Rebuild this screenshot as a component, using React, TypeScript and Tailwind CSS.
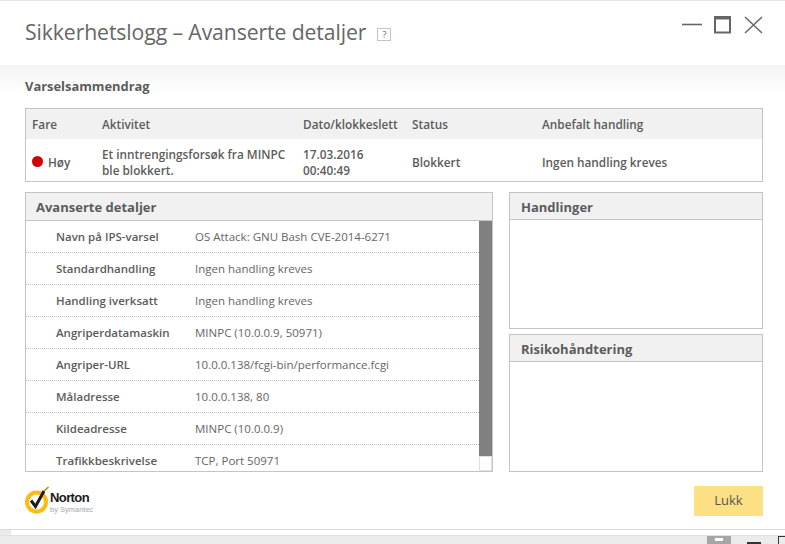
const FONT = "font-['Open_Sans','Noto_Sans',sans-serif]";

const DETAILS = [
  ['Navn på IPS-varsel', 'OS Attack: GNU Bash CVE-2014-6271'],
  ['Standardhandling', 'Ingen handling kreves'],
  ['Handling iverksatt', 'Ingen handling kreves'],
  ['Angriperdatamaskin', 'MINPC (10.0.0.9, 50971)'],
  ['Angriper-URL', '10.0.0.138/fcgi-bin/performance.fcgi'],
  ['Måladresse', '10.0.0.138, 80'],
  ['Kildeadresse', 'MINPC (10.0.0.9)'],
  ['Trafikkbeskrivelse', 'TCP, Port 50971'],
];

function NortonLogo() {
  return (
    <div className="flex items-start">
      <svg width="25" height="28" viewBox="0 0 25 28">
        <circle cx="11.5" cy="16" r="9.5" fill="none" stroke="#fdbb14" strokeWidth="4" />
        <path d="M6 14.5 L10.5 20.5 L19 5" fill="none" stroke="#1c1c1c" strokeWidth="3" />
        <path d="M19 5 L23.5 1" stroke="#b58a20" strokeWidth="1.5" />
      </svg>
      <div className="mt-[5px] flex flex-col font-['Liberation_Sans',sans-serif]">
        <span className="text-[13px] leading-[14px] font-bold tracking-[-0.6px] text-[#1c1c1c]">Norton</span>
        <span className="text-[7.5px] leading-[9px] text-[#a8a8a8]">by Symantec</span>
      </div>
    </div>
  );
}

function SidePanel({ title, className }: { title: string; className: string }) {
  return (
    <div className={`border border-[#c4c4c4] ${className}`}>
      <div className="h-[27px] border-b border-[#c4c4c4] bg-[#f1f1f1] pl-[11px] text-[13px] leading-[28px] font-bold text-[#5c5c5c]">
        {title}
      </div>
    </div>
  );
}

export default function App() {
  return (
    <div className={`flex h-[544px] w-[785px] flex-col overflow-hidden bg-white ${FONT}`}>
      <div className="h-px shrink-0 bg-[#e6e6e6]" />

      {/* Title bar */}
      <div className="flex h-[64px] shrink-0 items-start justify-between pr-[21px] pl-[25px]">
        <div className="mt-4 flex items-center">
          <h1 className="text-[21.2px] leading-[30px] font-normal tracking-[-0.1px] text-[#666]">Sikkerhetslogg – Avanserte detaljer</h1>
          <span className="mt-1 ml-[11px] flex h-[13px] w-[14px] items-center justify-center border border-[#c4c4c4] text-[9px] leading-none text-[#666]">?</span>
        </div>
        <svg width="82" height="20" viewBox="0 0 82 20" className="mt-[15px]">
          <path d="M0 8.5 H20" stroke="#666" strokeWidth="1.6" />
          <rect x="33" y="1" width="15" height="15.5" fill="none" stroke="#666" strokeWidth="2" />
          <path d="M32 0.5 H49 V3.5 H32 Z" fill="#666" />
          <path d="M63 1 L80 17 M80 1 L63 17" stroke="#666" strokeWidth="1.5" />
        </svg>
      </div>

      {/* Content */}
      <div className="flex-1 bg-gradient-to-b from-[#f5f5f5] to-white to-[30px] pr-[22px] pl-[25px]">
        <h2 className="mt-3 text-[12.9px] leading-[18px] font-bold text-[#5c5c5c]">Varselsammendrag</h2>

        <div className="mt-[13px] w-[738px] border border-[#c4c4c4] text-[11.8px] font-semibold text-[#5c5c5c]">
          <div className="flex h-[30px] items-center bg-[#f1f1f1] pt-0.5">
            <span className="w-[76px] pl-1.5">Fare</span>
            <span className="w-[201px]">Aktivitet</span>
            <span className="w-[109px]">Dato/klokkeslett</span>
            <span className="w-[130px]">Status</span>
            <span>Anbefalt handling</span>
          </div>
          <div className="flex h-[42px] items-center bg-white pt-[3px] leading-4">
            <span className="flex w-[76px] items-center pl-1.5">
              <span className="mr-[5px] h-[11px] w-[11px] rounded-full bg-[#d40000]" />
              Høy
            </span>
            <span className="w-[201px]">Et inntrengingsforsøk fra MINPC<br />ble blokkert.</span>
            <span className="w-[109px]">17.03.2016<br />00:40:49</span>
            <span className="w-[130px]">Blokkert</span>
            <span>Ingen handling kreves</span>
          </div>
        </div>

        <div className="mt-2.5 flex w-[738px] justify-between">
          {/* Advanced details */}
          <div className="h-[280px] w-[468px] border border-[#c4c4c4]">
            <div className="h-[28px] border-b border-[#c4c4c4] bg-[#f1f1f1] pl-2.5 text-[13px] leading-[28px] font-bold text-[#5c5c5c]">
              Avanserte detaljer
            </div>
            <div className="flex h-[250px]">
              <div className="flex-1 overflow-hidden">
                {DETAILS.map(([label, value]) => (
                  <div key={label} className="flex h-8 shrink-0 items-center border-b border-dotted border-[#bdbdbd] pl-[30px] text-[11.5px] last:border-b-0">
                    <span className="w-[139px] font-semibold text-[#5c5c5c]">{label}</span>
                    <span className="text-[#666]">{value}</span>
                  </div>
                ))}
              </div>
              <div className="flex w-[13px] flex-col">
                <div className="h-[235px] bg-[#808080]" />
                <div className="flex-1 border border-[#e0e0e0] bg-white" />
              </div>
            </div>
          </div>

          {/* Right column */}
          <div className="flex w-[254px] flex-col gap-[5px]">
            <SidePanel title="Handlinger" className="h-[137px]" />
            <SidePanel title="Risikohåndtering" className="h-[138px]" />
          </div>
        </div>

        <div className="mt-3 flex w-[738px] items-start justify-between">
          <div className="mt-0.5"><NortonLogo /></div>
          <button className="mt-0.5 h-[30px] w-[69px] bg-[#fde084] text-[13px] text-[#555]">Lukk</button>
        </div>
      </div>

      {/* Window behind */}
      <div className="h-[15px] shrink-0 border-t border-[#d9d9d9] bg-[#ebebeb]">
        <div className="ml-[11px] h-[5px] bg-white" />
        <div className="h-px bg-[#e0e0e0]" />
        <div className="flex h-[8px] items-start">
          <div className="ml-[707px] flex h-[8px] w-6 items-start justify-center bg-[#a6a6a6] pt-0.5">
            <div className="h-[3px] w-2 bg-white" />
          </div>
          <div className="mt-[6px] ml-4 h-0.5 w-[14px] bg-[#333]" />
          <div className="mt-0 ml-[17px] h-2 w-[7px] border-t border-l border-[#333]" />
        </div>
      </div>
    </div>
  );
}
